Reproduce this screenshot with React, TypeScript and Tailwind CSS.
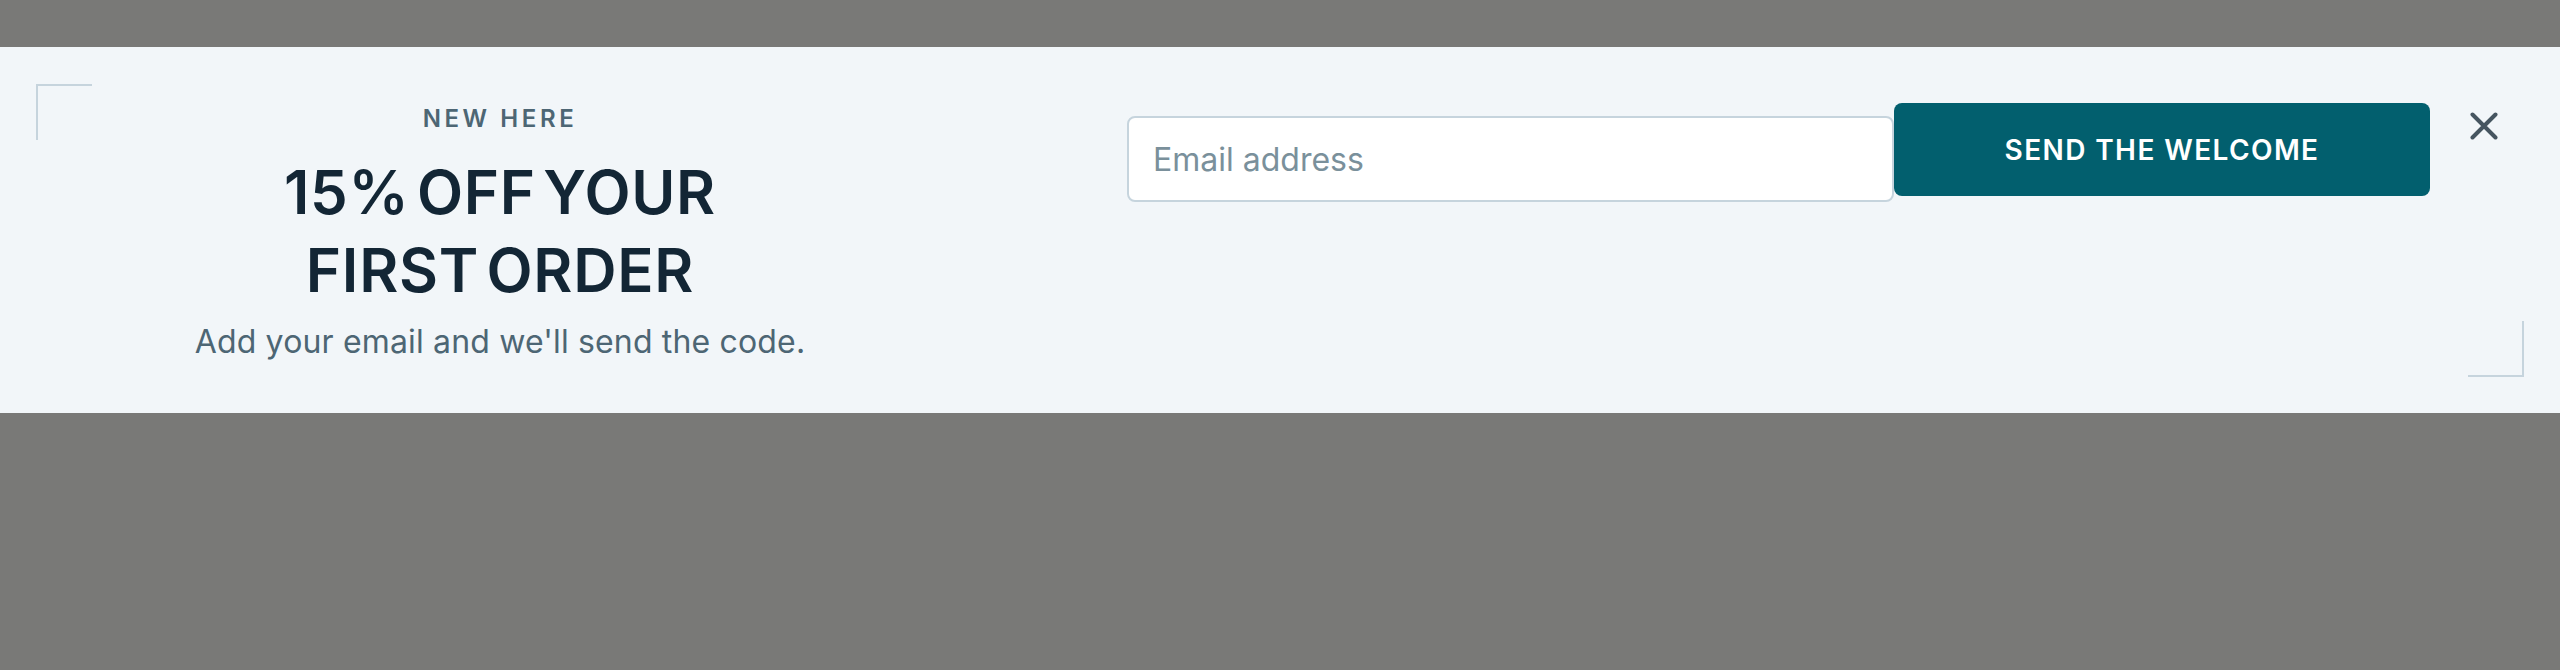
import { useState } from "react";

// Corner bracket used in the top-left and bottom-right of the banner
function Bracket({ pos }: { pos: "tl" | "br" }) {
  return (
    <span
      aria-hidden
      className={
        pos === "tl"
          ? "pointer-events-none absolute left-[36px] top-[37px] h-[56px] w-[56px] border-l-2 border-t-2 border-[#c6d4dd]"
          : "pointer-events-none absolute bottom-[36px] right-[36px] h-[56px] w-[56px] border-b-2 border-r-2 border-[#c6d4dd]"
      }
    />
  );
}

export default function App() {
  const [email, setEmail] = useState("");
  const [open, setOpen] = useState(true);

  return (
    <div
      className="min-h-screen bg-[#797977] pt-[47px]"
      style={{ fontFamily: "Inter, 'Noto Sans', sans-serif" }}
    >
      {open && (
        <section className="relative flex items-start bg-[#f2f6f9] pb-[49px] pl-[96px] pr-[52px] pt-[56px]">
          <Bracket pos="tl" />
          <Bracket pos="br" />

          {/* Offer copy */}
          <div className="flex w-[808px] shrink-0 flex-col items-center text-center">
            <p className="text-[24px] font-semibold uppercase leading-[32px] tracking-[0.15em] text-[#4d6674]">
              New here
            </p>
            <h2 className="mt-[18px] text-[60px] font-semibold leading-[78px] tracking-[0.012em] text-[#132635] [word-spacing:-0.14em]">
              15% OFF YOUR
              <br />
              FIRST ORDER
            </h2>
            <p className="mt-[11px] text-[32px] leading-[44px] tracking-[0.005em] text-[#4d6674]">
              Add your email and we'll send the code.
            </p>
          </div>

          {/* Signup form */}
          <form
            className="ml-[223px] flex items-start"
            onSubmit={(e) => e.preventDefault()}
          >
            <input
              type="email"
              value={email}
              onChange={(e) => setEmail(e.target.value)}
              placeholder="Email address"
              className="mt-[13px] h-[86px] w-[767px] rounded-lg border-2 border-[#c6d4dd] bg-white px-[24px] text-[32px] text-[#132635] outline-none placeholder:text-[#7a909b]"
            />
            <button
              type="submit"
              className="h-[93px] w-[536px] rounded-lg bg-[#025f6e] text-[28px] font-semibold uppercase tracking-[0.05em] text-white"
            >
              Send the welcome
            </button>
          </form>

          <button
            type="button"
            aria-label="Close"
            onClick={() => setOpen(false)}
            className="ml-[30px] mt-[-1px] flex h-12 w-12 shrink-0 items-center justify-center text-[#465560]"
          >
            <svg width="28" height="28" viewBox="0 0 28 28" fill="none">
              <path
                d="M2.5 2.5 25.5 25.5M25.5 2.5 2.5 25.5"
                stroke="currentColor"
                strokeWidth="4"
                strokeLinecap="round"
              />
            </svg>
          </button>
        </section>
      )}
    </div>
  );
}
